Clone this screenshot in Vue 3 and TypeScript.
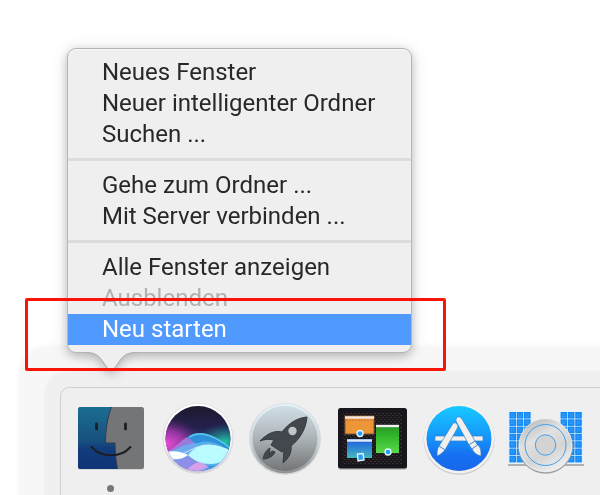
<script setup lang="ts">
interface MenuEntry {
  label: string
  disabled?: boolean
  active?: boolean
}

const groups: MenuEntry[][] = [
  [
    { label: 'Neues Fenster' },
    { label: 'Neuer intelligenter Ordner' },
    { label: 'Suchen ...' },
  ],
  [
    { label: 'Gehe zum Ordner ...' },
    { label: 'Mit Server verbinden ...' },
  ],
  [
    { label: 'Alle Fenster anzeigen' },
    { label: 'Ausblenden', disabled: true },
    { label: 'Neu starten', active: true },
  ],
]

const tileRows = [12, 19.3, 26.6, 33.9, 41.2, 48.5, 55.8]
const tileColumns = [2.4, 9.7, 17, 53.6, 60.9, 68.2]
</script>

<template>
  <main class="desktop">
    <section class="popover">
      <div class="bubble">
        <div class="menu">
          <ul v-for="(group, g) in groups" :key="g" class="group">
            <li v-for="entry in group" :key="entry.label">
              <button
                type="button"
                class="entry"
                :class="{ active: entry.active }"
                :disabled="entry.disabled"
              >{{ entry.label }}</button>
            </li>
          </ul>
        </div>
        <svg class="tail" width="52" height="21" viewBox="0 0 52 21">
          <path d="M0 0H52V1.500C44 1.500 40 3 36 8L28.500 18.500Q26 21.500 23.500 18.500L16 8C12 3 8 1.500 0 1.500Z" fill="#efefef" />
          <path d="M0 1.500C8 1.500 12 3 16 8L23.500 18.500Q26 21.500 28.500 18.500L36 8C40 3 44 1.500 52 1.500" fill="none" stroke="#a9acab" />
        </svg>
      </div>
      <div class="marker"></div>
    </section>

    <nav class="dock">
      <button type="button" class="app running" aria-label="Finder">
        <svg viewBox="0 0 76 76">
          <defs>
            <linearGradient id="finder" x1="0" y1="0" x2="0" y2="1">
              <stop offset="0" stop-color="#1b6d92" />
              <stop offset=".55" stop-color="#17517e" />
              <stop offset=".66" stop-color="#123d7c" />
              <stop offset="1" stop-color="#103477" />
            </linearGradient>
          </defs>
          <rect x="5" y="7" width="66" height="62" rx="2.5" fill="#d8d8d8" />
          <rect x="5" y="6" width="66" height="62" rx="2.5" fill="#747577" />
          <path d="M38.5 6C34 18 32.600 29 32.500 42H42C42 51 43 60 44.500 68H7.500Q5 68 5 65.500V8.500Q5 6 7.500 6Z" fill="url(#finder)" />
          <path d="M38.500 6C34 18 32.600 29 32.500 42H42C42 51 43 60 44.500 68" fill="none" stroke="#38394b" />
          <path d="M23.500 23V28M52.500 23V28" stroke="#1d1d25" stroke-width="2.800" stroke-linecap="round" />
          <path d="M18.500 46C28 57 48 57 57.500 46" fill="none" stroke="#1d1d25" stroke-width="2" stroke-linecap="round" />
        </svg>
      </button>

      <button type="button" class="app" aria-label="Siri">
        <svg viewBox="0 0 76 76">
          <defs>
            <clipPath id="siri-clip"><circle cx="38" cy="37.500" r="32.500" /></clipPath>
            <linearGradient id="siri-bg" x1="0" y1="0" x2="0" y2="1">
              <stop offset="0" stop-color="#1b1826" />
              <stop offset=".35" stop-color="#24204e" />
              <stop offset=".6" stop-color="#28507f" />
              <stop offset="1" stop-color="#2889e0" />
            </linearGradient>
            <radialGradient id="siri-pink">
              <stop offset="0" stop-color="#e84bd5" />
              <stop offset=".5" stop-color="#a337a9" stop-opacity=".85" />
              <stop offset="1" stop-color="#54256e" stop-opacity="0" />
            </radialGradient>
            <radialGradient id="siri-green">
              <stop offset="0" stop-color="#22c5a5" />
              <stop offset="1" stop-color="#158491" stop-opacity="0" />
            </radialGradient>
            <linearGradient id="siri-ring" x1="0" y1="0" x2="0" y2="1">
              <stop offset="0" stop-color="#ffffff" />
              <stop offset=".65" stop-color="#f3f2f6" />
              <stop offset="1" stop-color="#c9c5d5" />
            </linearGradient>
          </defs>
          <circle cx="38" cy="37.500" r="35.500" fill="#d9d9dd" />
          <circle cx="38" cy="37" r="34.500" fill="url(#siri-ring)" />
          <g clip-path="url(#siri-clip)">
            <path d="M0 0H76V76H0Z" fill="url(#siri-bg)" />
            <ellipse cx="7" cy="43" rx="36" ry="27" fill="url(#siri-pink)" />
            <ellipse cx="65" cy="41" rx="26" ry="19" fill="url(#siri-green)" />
            <path d="M5 52C17 49 24 34 38 32C54 32 64 44 76 54V70H0V54Z" fill="#2f8fd8" />
            <path d="M29 36C42 28 57 36 74 50" fill="none" stroke="#52c9ea" stroke-width="1.600" />
            <path d="M0 53C14 50 19 40 27 36C36 41 42 54 56 60L24 74L0 65Z" fill="#dc72e0" fill-opacity=".6" />
            <path d="M5 53C16 49 24 42 38 42C49 38 61 43 72 52V65H5Z" fill="#63b8f2" fill-opacity=".75" />
            <path d="M0 56C12 60 22 60 28 55L46 66L20 76L0 65Z" fill="#8c8fe8" />
            <path d="M0 52C12 49 21 50 28 54C22 59 11 60 0 55Z" fill="#ffffff" />
            <path d="M28 54C38 41 56 41 73 51C63 67 40 66 28 54Z" fill="#b8fcff" />
            <path d="M20 76C28 67 34 61 41 61L50 67L38 76Z" fill="#efa6eb" fill-opacity=".75" />
            <path d="M35 74C45 66 52 67 66 60L60 76Z" fill="#3595e9" />
            <path d="M8 55C26 56 34 43 49 44C59 45 65 49 72 52" fill="none" stroke="#ddf9ff" stroke-width=".8" />
          </g>
        </svg>
      </button>

      <button type="button" class="app" aria-label="Launchpad">
        <svg viewBox="0 0 76 76">
          <defs>
            <linearGradient id="rocket-bg" x1="0" y1="0" x2="0" y2="1">
              <stop offset="0" stop-color="#cfdee6" />
              <stop offset=".45" stop-color="#b1b8bc" />
              <stop offset="1" stop-color="#737577" />
            </linearGradient>
            <linearGradient id="rocket-rim" x1="0" y1="0" x2="0" y2="1">
              <stop offset="0" stop-color="#e4f2f7" />
              <stop offset=".6" stop-color="#c8d3d7" />
              <stop offset="1" stop-color="#8d9193" />
            </linearGradient>
          </defs>
          <circle cx="38" cy="38" r="36" fill="#d7d8d8" />
          <circle cx="38" cy="37.500" r="35" fill="url(#rocket-rim)" />
          <circle cx="38" cy="37.500" r="32.500" fill="url(#rocket-bg)" />
          <path d="M60 16C50 17 42 22 35 31C27 29 20 33 13 40C18 38 23 38 27 39L24 44L35 51L37 50C37 54 36 58 36 62C42 57 45 51 44 45C54 37 59 27 60 16Z" fill="#42484d" stroke="#343a3f" stroke-linejoin="round" />
          <path d="M23 47C18 50 17 54 16 58C20 58 26 56 28 51L25 50L22 54Z" fill="#42484d" stroke="#343a3f" />
          <circle cx="45.500" cy="30" r="4.200" fill="#c1c5c7" />
        </svg>
      </button>

      <button type="button" class="app" aria-label="Mission Control">
        <svg viewBox="0 0 76 76">
          <defs>
            <pattern id="weave" width="4" height="4" patternUnits="userSpaceOnUse">
              <path d="M0 0H2V1H0ZM2 2H4V3H2Z" fill="#38302f" />
            </pattern>
            <linearGradient id="blue-window" x1="0" y1="0" x2="0" y2="1">
              <stop offset=".2" stop-color="#246ddc" />
              <stop offset="1" stop-color="#44b9bd" />
            </linearGradient>
            <linearGradient id="green-window" x1="0" y1="0" x2="0" y2="1">
              <stop offset="0" stop-color="#298f27" />
              <stop offset=".35" stop-color="#2fb42a" />
              <stop offset="1" stop-color="#5bd84b" />
            </linearGradient>
          </defs>
          <rect x="4" y="8" width="69" height="61" rx="2.500" fill="#c8c8c9" />
          <rect x="4" y="7" width="69" height="60.500" rx="2.500" fill="#1a171c" />
          <rect x="9" y="12" width="59" height="51" fill="url(#weave)" />
          <rect x="11" y="15" width="29" height="18" fill="#ed9637" stroke="#845635" />
          <path d="M11 16.500H40" stroke="#f1e9e1" stroke-width="2.400" />
          <path d="M12 19H39" stroke="#c8723d" stroke-dasharray="2 1" />
          <rect x="42" y="24" width="23" height="28" fill="url(#green-window)" />
          <path d="M42 25H65" stroke="#f0f0ed" stroke-width="2.400" />
          <rect x="13" y="38" width="25" height="19" fill="url(#blue-window)" />
          <path d="M13 39.500H38" stroke="#e6eaf1" stroke-width="2.400" />
          <g fill="#249cf4" stroke="#dcf6ff" stroke-width="1.400">
            <circle cx="26" cy="32.500" r="3" />
            <circle cx="54" cy="51" r="3" />
            <path d="M23.500 53L29 52.500L30 59L24 60Z" />
          </g>
        </svg>
      </button>

      <button type="button" class="app" aria-label="App Store">
        <svg viewBox="0 0 76 76">
          <defs>
            <linearGradient id="store" x1="0" y1="0" x2="0" y2="1">
              <stop offset="0" stop-color="#18c9ff" />
              <stop offset=".5" stop-color="#1594fb" />
              <stop offset=".75" stop-color="#1770f1" />
              <stop offset="1" stop-color="#1767ea" />
            </linearGradient>
          </defs>
          <circle cx="38" cy="38.500" r="35.500" fill="#cfcfd0" />
          <circle cx="38" cy="37.500" r="35" fill="#f4f2f1" />
          <circle cx="38" cy="37.500" r="32.500" fill="url(#store)" />
          <g fill="#f2f0ef" stroke="#317fc8" stroke-width=".7">
            <path d="M14 35H62V40H14Z" />
            <path d="M35.500 17Q38 14 41 18L54 40L48 44L35.500 21Q34 19 35.500 17Z" />
            <path d="M48 44L54 40L56.500 44L51 48Z" />
            <path d="M51 48L56.500 44C60 46 60 50 60 55C56 54 53 52 51 48Z" />
            <path d="M31 24Q33 20 36 23Q38 25 36 28L24 49L18 45Z" />
            <path d="M18 45L24 49C22 51 19 54 16 55C16 51 16 48 18 45Z" />
          </g>
        </svg>
      </button>

      <button type="button" class="app" aria-label="Satellit">
        <svg viewBox="0 0 76 76">
          <defs>
            <linearGradient id="dish" x1=".2" y1="0" x2=".75" y2="1">
              <stop offset="0" stop-color="#b9bbbb" />
              <stop offset=".35" stop-color="#e1e1e1" />
              <stop offset=".65" stop-color="#d5d5d5" />
              <stop offset="1" stop-color="#f2f2f2" />
            </linearGradient>
          </defs>
          <path d="M0 63H25V65H0ZM51 63H76V65H51Z" fill="#aeb1b4" />
          <path d="M0 10H24V63H0ZM51 10H76V63H51Z" fill="#e2f1fb" />
          <g v-for="row in tileRows" :key="row">
            <g v-for="column in tileColumns" :key="column">
              <rect :x="column - 1" :y="row - 1" width="6.600" height="6.600" fill="#168af4" />
              <rect :x="column + 1" :y="row + 1" width="2.400" height="2.400" fill="none" stroke="#3da2fa" stroke-width=".7" />
            </g>
          </g>
          <circle cx="37.500" cy="45.500" r="27.300" fill="#9ea1a3" />
          <circle cx="37.500" cy="44.500" r="26.800" fill="#eeeeef" />
          <circle cx="37.500" cy="44" r="26" fill="url(#dish)" />
          <circle cx="37.500" cy="44" r="20.500" fill="none" stroke="#459fec" />
          <circle cx="37.500" cy="44" r="10.200" fill="#d3d3d3" stroke="#459fec" />
        </svg>
      </button>
    </nav>
  </main>
</template>

<style>
body {
  margin: 0;
  overflow: hidden;
  background: #ffffff;
}
</style>

<style scoped>
.desktop {
  box-sizing: border-box;
  min-height: 100vh;
  padding: 48px 0 0 60px;
  overflow: hidden;
  font-family: Roboto, "Liberation Sans", sans-serif;
}

.popover {
  position: relative;
  z-index: 1;
  width: fit-content;
  margin-left: 7px;
}

.bubble {
  filter: drop-shadow(0 3px 5px rgba(0, 0, 0, 0.2)) drop-shadow(0 2px 8px rgba(0, 0, 0, 0.12));
}

.menu {
  box-sizing: border-box;
  min-width: 345px;
  padding: 8px 0 7px;
  border: 1px solid #b5b7b6;
  border-radius: 9px;
  background: #efefef;
  box-shadow: inset 0 1px 0 #f8f8f8;
}

.group {
  margin: 0;
  padding: 0;
  list-style: none;
}

.group + .group {
  margin-top: 8px;
  padding-top: 9px;
  border-top: 3px solid #dcdcdc;
}

.entry {
  display: block;
  width: 100%;
  height: 31px;
  padding: 0 32px 2px 34px;
  border: 0;
  background: transparent;
  color: #292827;
  font-family: inherit;
  font-size: 24px;
  line-height: 28px;
  text-align: left;
  white-space: nowrap;
}

.entry:disabled {
  color: #b0b2b1;
}

.entry.active {
  background: #5099ff;
  color: #ffffff;
}

.tail {
  display: block;
  margin: -2px 0 0 18px;
}

.marker {
  position: absolute;
  right: -34px;
  bottom: 1px;
  left: -42px;
  box-sizing: border-box;
  height: 73px;
  border: 3px solid #fa1408;
  border-radius: 2px;
}

.dock {
  display: flex;
  gap: 11px;
  width: max-content;
  margin-top: 15px;
  padding: 13px 40px 18px 12px;
  border: 1px solid #cfcfcf;
  border-bottom: 0;
  border-top-left-radius: 9px;
  background: #efefef;
  box-shadow: 0 0 2px 16px #f0f0f0, 0 0 4px 42px #f7f7f7;
}

.app {
  position: relative;
  width: 76px;
  height: 76px;
  padding: 0;
  border: 0;
  background: transparent;
}

.app svg {
  display: block;
  width: 76px;
  height: 76px;
}

.running::after {
  position: absolute;
  top: 84px;
  left: 34px;
  width: 7px;
  height: 7px;
  border-radius: 50%;
  background: #757675;
  content: "";
}
</style>
